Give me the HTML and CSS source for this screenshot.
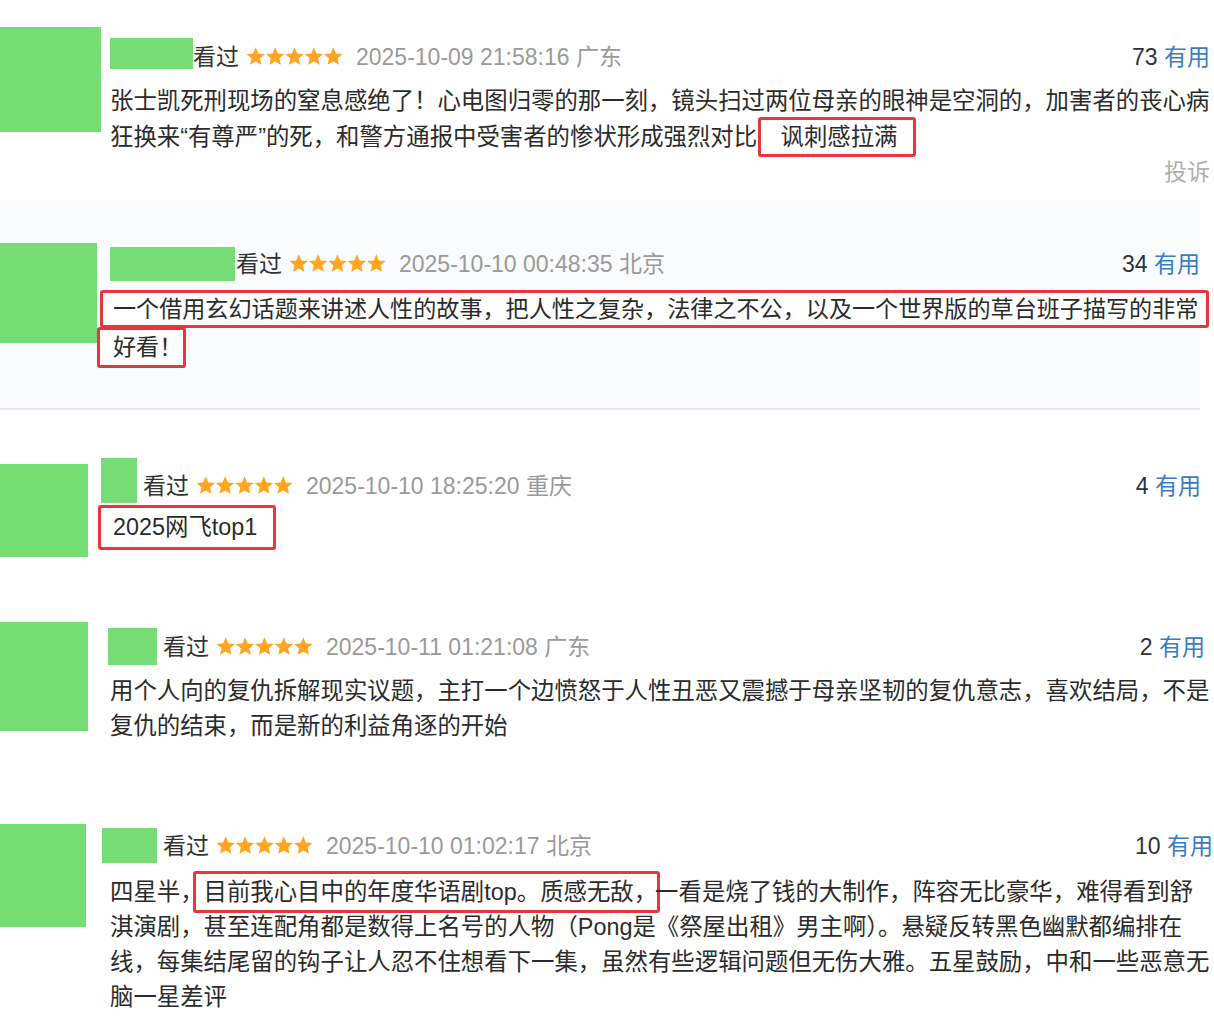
FILE: index.html
```html
<!DOCTYPE html>
<html>
<head>
    <meta charset="utf-8">
    <title>短评</title>
    <link rel="stylesheet" href="styles.css">
</head>
<body>
    <svg class="defs" width="0" height="0">
        <symbol id="stars5" viewBox="0 0 100 20">
            <g id="star1"><polygon points="10,0.3 12.7,6.58 19.51,7.21 14.37,11.72 15.88,18.39 10,14.9 4.12,18.39 5.63,11.72 0.49,7.21 7.3,6.58"/></g>
            <use href="#star1" x="20"/>
            <use href="#star1" x="40"/>
            <use href="#star1" x="60"/>
            <use href="#star1" x="80"/>
        </symbol>
    </svg>

    <div class="feed">
        <div class="review review-1">
            <div class="avatar"></div>
            <div class="main">
                <div class="meta">
                    <span class="name"></span>
                    <span class="watched">看过</span>
                    <svg class="stars" viewBox="0 0 100 20"><use href="#stars5"/></svg>
                    <span class="time">2025-10-09 21:58:16 广东</span>
                    <span class="votes"><span class="count">73</span> <span class="useful">有用</span></span>
                </div>
                <p class="text">张士凯死刑现场的窒息感绝了！心电图归零的那一刻，镜头扫过两位母亲的眼神是空洞的，加害者的丧心病<br>狂换来“有尊严”的死，和警方通报中受害者的惨状形成强烈对比，<span class="mark mark-end">讽刺感拉满</span></p>
                <div class="report">投诉</div>
            </div>
        </div>

        <div class="review review-2">
            <div class="avatar"></div>
            <div class="main">
                <div class="meta">
                    <span class="name"></span>
                    <span class="watched">看过</span>
                    <svg class="stars" viewBox="0 0 100 20"><use href="#stars5"/></svg>
                    <span class="time">2025-10-10 00:48:35 北京</span>
                    <span class="votes"><span class="count">34</span> <span class="useful">有用</span></span>
                </div>
                <div class="text">
                    <div class="mark mark-line">一个借用玄幻话题来讲述人性的故事，把人性之复杂，法律之不公，以及一个世界版的草台班子描写的非常</div>
                    <div class="mark mark-tail">好看！</div>
                </div>
            </div>
        </div>

        <div class="review review-3">
            <div class="avatar"></div>
            <div class="main">
                <div class="meta">
                    <span class="name"></span>
                    <span class="watched">看过</span>
                    <svg class="stars" viewBox="0 0 100 20"><use href="#stars5"/></svg>
                    <span class="time">2025-10-10 18:25:20 重庆</span>
                    <span class="votes"><span class="count">4</span> <span class="useful">有用</span></span>
                </div>
                <div class="text">
                    <div class="mark mark-short">2025网飞top1</div>
                </div>
            </div>
        </div>

        <div class="review review-4">
            <div class="avatar"></div>
            <div class="main">
                <div class="meta">
                    <span class="name"></span>
                    <span class="watched">看过</span>
                    <svg class="stars" viewBox="0 0 100 20"><use href="#stars5"/></svg>
                    <span class="time">2025-10-11 01:21:08 广东</span>
                    <span class="votes"><span class="count">2</span> <span class="useful">有用</span></span>
                </div>
                <p class="text">用个人向的复仇拆解现实议题，主打一个边愤怒于人性丑恶又震撼于母亲坚韧的复仇意志，喜欢结局，不是<br>复仇的结束，而是新的利益角逐的开始</p>
            </div>
        </div>

        <div class="review review-5">
            <div class="avatar"></div>
            <div class="main">
                <div class="meta">
                    <span class="name"></span>
                    <span class="watched">看过</span>
                    <svg class="stars" viewBox="0 0 100 20"><use href="#stars5"/></svg>
                    <span class="time">2025-10-10 01:02:17 北京</span>
                    <span class="votes"><span class="count">10</span> <span class="useful">有用</span></span>
                </div>
                <p class="text">四星半，<span class="mark mark-inline">目前我心目中的年度华语剧top。质感无敌，</span>一看是烧了钱的大制作，阵容无比豪华，难得看到舒<br>淇演剧，甚至连配角都是数得上名号的人物（Pong是《祭屋出租》男主啊）。悬疑反转黑色幽默都编排在<br>线，每集结尾留的钩子让人忍不住想看下一集，虽然有些逻辑问题但无伤大雅。五星鼓励，中和一些恶意无<br>脑一星差评</p>
            </div>
        </div>
    </div>
</body>
</html>
```

FILE: styles.css
```css
html, body { margin: 0; padding: 0; background: #fff; overflow: hidden; }
body { font-family: "Liberation Sans", "Noto Sans CJK SC", sans-serif; color: #2b2b2b; width: 1214px; height: 1022px; }
.defs { position: absolute; }

.feed { display: flex; flex-direction: column; }

.review { display: flex; align-items: flex-start; box-sizing: border-box; }
.avatar { flex: none; width: var(--av-w); height: var(--av-h); margin-top: var(--av-top); background: #74dd74; }
.main { flex: 1; min-width: 0; margin-left: var(--gap); margin-top: var(--meta-top); padding-right: var(--right); }

.meta { display: flex; align-items: center; font-size: 23px; line-height: 28px; white-space: nowrap; }
.name { flex: none; width: var(--name-w); height: var(--name-h); background: #76dc76; }
.watched { margin-left: var(--watch-gap); color: #333; }
.stars { flex: none; width: 97px; height: 19.4px; margin-left: 7px; fill: #ffa51f; }
.time { margin-left: 13px; color: #9a9a9a; }
.votes { margin-left: auto; }
.count { color: #2c3340; }
.useful { color: #3a7bc6; }

.text { margin: var(--text-top) 0 0 var(--text-indent); font-size: 23.4px; line-height: 36px; white-space: nowrap; }
.mark { border: 3px solid #e8373c; border-radius: 3px; background: #fff; }
.mark-end { padding: 4px 16px 4px 20px; margin-left: -23px; }
.mark-line { font-size: 23.1px; line-height: 32px; margin: 0 -9px 0 -10px; padding-left: 10px; }
.mark-tail { display: inline-block; font-size: 23.1px; line-height: 35px; margin: -1px 0 0 -13px; padding: 0 1px 0 13px; }
.mark-short { display: inline-block; line-height: 39px; margin-left: -3px; padding: 0 16px 0 12px; }
.mark-inline { padding: 5px 0 5px 8px; margin: 0 -5px 0 -11px; }

.report { margin-top: 5px; text-align: right; font-size: 23px; line-height: 25px; color: #b0b0b0; }

.review-1 { height: 200px; --av-w: 101px; --av-h: 105px; --av-top: 27px; --gap: 9px; --meta-top: 36px; --right: 4px; --name-w: 83px; --name-h: 31px; --watch-gap: 0px; --text-top: 16px; --text-indent: 0px; }
.review-1 .watched, .review-1 .stars, .review-1 .time, .review-1 .votes { margin-top: 7px; }
.review-1 .meta { margin-bottom: -4px; }
.review-2 { height: 210px; margin-right: 14px; background: #f9fbfd; border-bottom: 2px solid #e8ebef; --av-w: 97px; --av-h: 100px; --av-top: 43px; --gap: 13px; --meta-top: 47px; --right: 0px; --name-w: 125px; --name-h: 34px; --watch-gap: 1px; --text-top: 9px; --text-indent: 0px; }
.review-3 { height: 180px; --av-w: 88px; --av-h: 93px; --av-top: 54px; --gap: 13px; --meta-top: 48px; --right: 13px; --name-w: 36px; --name-h: 45px; --watch-gap: 6px; --text-top: 2px; --text-indent: 0px; }
.review-3 .watched, .review-3 .stars, .review-3 .time, .review-3 .votes { margin-top: 10px; }
.review-4 { height: 200px; --av-w: 88px; --av-h: 109px; --av-top: 32px; --gap: 20px; --meta-top: 38px; --right: 9px; --name-w: 49px; --name-h: 37px; --watch-gap: 6px; --text-top: 9px; --text-indent: 2px; }
.review-4 .text { line-height: 35px; }
.review-5 { height: 232px; --av-w: 86px; --av-h: 103px; --av-top: 34px; --gap: 16px; --meta-top: 38px; --right: 1px; --name-w: 55px; --name-h: 35px; --watch-gap: 6px; --text-top: 12px; --text-indent: 8px; }
.review-5 .text { line-height: 35px; }
```
